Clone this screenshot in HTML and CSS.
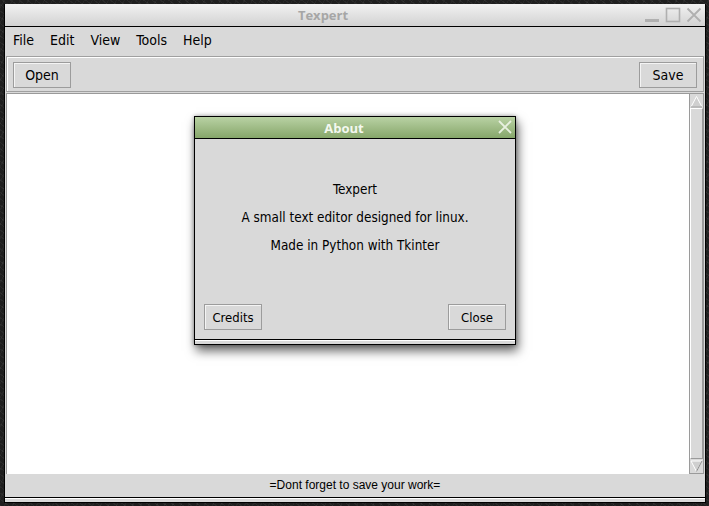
FILE: index.html
```html
<!DOCTYPE html>
<html>
<head>
<meta charset="utf-8">
<link rel="stylesheet" href="styles.css">
</head>
<body>
<div class="desktop">
  <div class="window">
    <div class="titlebar">
      <span class="title">Texpert</span>
      <div class="wm-buttons">
        <svg width="16" height="16" viewBox="0 0 16 16"><rect x="1" y="12" width="14" height="3" fill="#b0b0b0"/></svg>
        <svg width="16" height="16" viewBox="0 0 16 16"><rect x="1.5" y="1.5" width="13" height="13" fill="none" stroke="#b0b0b0" stroke-width="1.6"/></svg>
        <svg width="16" height="16" viewBox="0 0 16 16"><path d="M1.5 1.5L14.5 14.5M14.5 1.5L1.5 14.5" stroke="#b0b0b0" stroke-width="1.8"/></svg>
      </div>
    </div>
    <div class="menubar">
      <span class="menu">File</span>
      <span class="menu">Edit</span>
      <span class="menu">View</span>
      <span class="menu">Tools</span>
      <span class="menu">Help</span>
    </div>
    <div class="toolbar">
      <button class="btn">Open</button>
      <button class="btn">Save</button>
    </div>
    <div class="editor">
      <div class="textarea"></div>
      <div class="scrollbar">
        <div class="arrow">
          <svg width="13" height="13" viewBox="0 0 13 13"><path d="M6.5 1.5L12 12H1Z" fill="#cfcfcf" stroke="#ffffff" stroke-width="1"/><path d="M12 12H1" stroke="#8a8a8a"/></svg>
        </div>
        <div class="trough"></div>
        <div class="arrow">
          <svg width="13" height="13" viewBox="0 0 13 13"><path d="M6.5 11.5L12 1H1Z" fill="#cfcfcf" stroke="#ffffff" stroke-width="1"/><path d="M6.5 11.5L12 1" stroke="#8a8a8a"/></svg>
        </div>
      </div>
    </div>
    <div class="statusbar">=Dont forget to save your work=</div>
    <div class="bottomframe"></div>
  </div>

  <div class="dialog">
    <div class="dlg-title">
      <span>About</span>
      <svg class="dlg-close" width="14" height="14" viewBox="0 0 14 14"><path d="M1 1L13 13M13 1L1 13" stroke="#e8f0e0" stroke-width="1.8"/></svg>
    </div>
    <div class="dlg-body">
      <p class="line">Texpert</p>
      <p class="line">A small text editor designed for linux.</p>
      <p class="line">Made in Python with Tkinter</p>
      <div class="dlg-buttons">
        <button class="btn dbtn">Credits</button>
        <button class="btn dbtn">Close</button>
      </div>
    </div>
    <div class="dlg-foot"></div>
  </div>
</div>
</body>
</html>
```

FILE: styles.css
```css
html, body {
  margin: 0;
  padding: 0;
}
body {
  width: 709px;
  height: 506px;
  overflow: hidden;
  background: #1c1c1c;
}
.desktop {
  position: relative;
  width: 709px;
  height: 506px;
  padding: 4px 0 0 4px;
  box-sizing: border-box;
  background:
    repeating-linear-gradient(37deg, rgba(255,255,255,0.05) 0 1px, transparent 1px 5px),
    repeating-linear-gradient(-61deg, rgba(255,255,255,0.04) 0 1px, transparent 1px 7px),
    #1f1f1f;
}
.window {
  width: 702px;
  height: 499px;
  display: flex;
  flex-direction: column;
  border-left: 1px solid #000;
  border-right: 1px solid #000;
  box-sizing: border-box;
  background: #d9d9d9;
}
.titlebar {
  height: 23px;
  flex: none;
  display: flex;
  align-items: center;
  justify-content: center;
  position: relative;
  background: linear-gradient(#f2f2f2, #d2d2d2);
  border-bottom: 1px solid #000;
  box-sizing: border-box;
  font-family: "Open Sans", "DejaVu Sans", sans-serif;
  font-weight: bold;
  font-size: 13px;
  color: #a6a6a6;
}
.title {
  margin-left: -64px;
}
.wm-buttons {
  position: absolute;
  right: 3px;
  top: 3px;
  display: flex;
  gap: 5px;
}
.menubar {
  height: 29px;
  flex: none;
  display: flex;
  align-items: center;
  padding-left: 8px;
  padding-bottom: 3px;
  box-sizing: border-box;
  font-family: "DejaVu Sans", sans-serif;
  font-stretch: condensed;
  font-size: 14px;
  color: #000;
}
.menu {
  margin-right: 16px;
}
.toolbar {
  height: 36px;
  flex: none;
  display: flex;
  justify-content: space-between;
  align-items: flex-start;
  margin: 0 1px;
  border: 1px solid #a0a0a0;
  box-shadow: inset 1px 1px 0 #fff;
  padding: 5px 6px 0 6px;
  box-sizing: border-box;
}
.btn {
  font-family: "DejaVu Sans", sans-serif;
  font-stretch: condensed;
  font-size: 14px;
  color: #000;
  background: #d9d9d9;
  border: 1px solid #9c9c9c;
  box-shadow: inset 1px 1px 0 #f4f4f4;
  height: 26px;
  width: 58px;
  padding: 0;
  margin: 0;
}
.editor {
  flex: 1;
  display: flex;
  margin: 1px 1px 0 1px;
}
.textarea {
  flex: 1;
  background: #fff;
  border-left: 1px solid #9a9a9a;
  border-top: 1px solid #9a9a9a;
}
.scrollbar {
  width: 15px;
  display: flex;
  flex-direction: column;
  background: #d9d9d9;
  border: 1px solid #9a9a9a;
  box-sizing: border-box;
}
.arrow {
  height: 14px;
  display: flex;
  justify-content: center;
  align-items: center;
}
.trough {
  flex: 1;
  border-top: 1px solid #fff;
  border-left: 1px solid #fff;
  border-right: 1px solid #9a9a9a;
  border-bottom: 1px solid #9a9a9a;
}
.statusbar {
  height: 24px;
  flex: none;
  display: flex;
  align-items: center;
  justify-content: center;
  padding-bottom: 1px;
  box-sizing: border-box;
  font-family: "Liberation Sans", Arial, sans-serif;
  font-size: 12px;
  color: #000;
  border-bottom: 1px solid #000;
}
.bottomframe {
  height: 5px;
  flex: none;
  box-sizing: border-box;
  background: #d9d9d9;
  border-top: 1px solid #fff;
  border-bottom: 1px solid #000;
}
.dialog {
  position: absolute;
  left: 194px;
  top: 116px;
  width: 322px;
  height: 229px;
  box-sizing: border-box;
  border: 1px solid #000;
  background: #d9d9d9;
  display: flex;
  flex-direction: column;
  box-shadow: 2px 6px 10px rgba(0,0,0,0.6), 0 0 4px rgba(0,0,0,0.35);
}
.dlg-title {
  height: 22px;
  flex: none;
  position: relative;
  display: flex;
  align-items: center;
  justify-content: center;
  background: linear-gradient(#b9d2a4, #86a66a);
  border-bottom: 1px solid #000;
  box-sizing: border-box;
  font-family: "Open Sans", "DejaVu Sans", sans-serif;
  font-weight: bold;
  font-size: 13px;
  color: #f4f8f0;
}
.dlg-title span {
  margin-left: -22px;
}
.dlg-close {
  position: absolute;
  right: 3px;
  top: 3px;
}
.dlg-body {
  flex: 1;
  display: flex;
  flex-direction: column;
  align-items: center;
  padding-top: 43px;
  font-family: "DejaVu Sans", sans-serif;
  font-stretch: condensed;
  font-size: 13.4px;
  color: #000;
}
.line {
  margin: 0 0 12px 0;
  line-height: 16px;
}
.dlg-buttons {
  margin-top: auto;
  width: 100%;
  box-sizing: border-box;
  display: flex;
  justify-content: space-between;
  padding: 0 9px 9px 9px;
}
.dbtn {
  font-size: 13px;
}
.dlg-foot {
  height: 4px;
  flex: none;
  border-top: 1px solid #000;
  background: #d9d9d9;
  box-shadow: inset 0 1px 0 #fff;
}
```
